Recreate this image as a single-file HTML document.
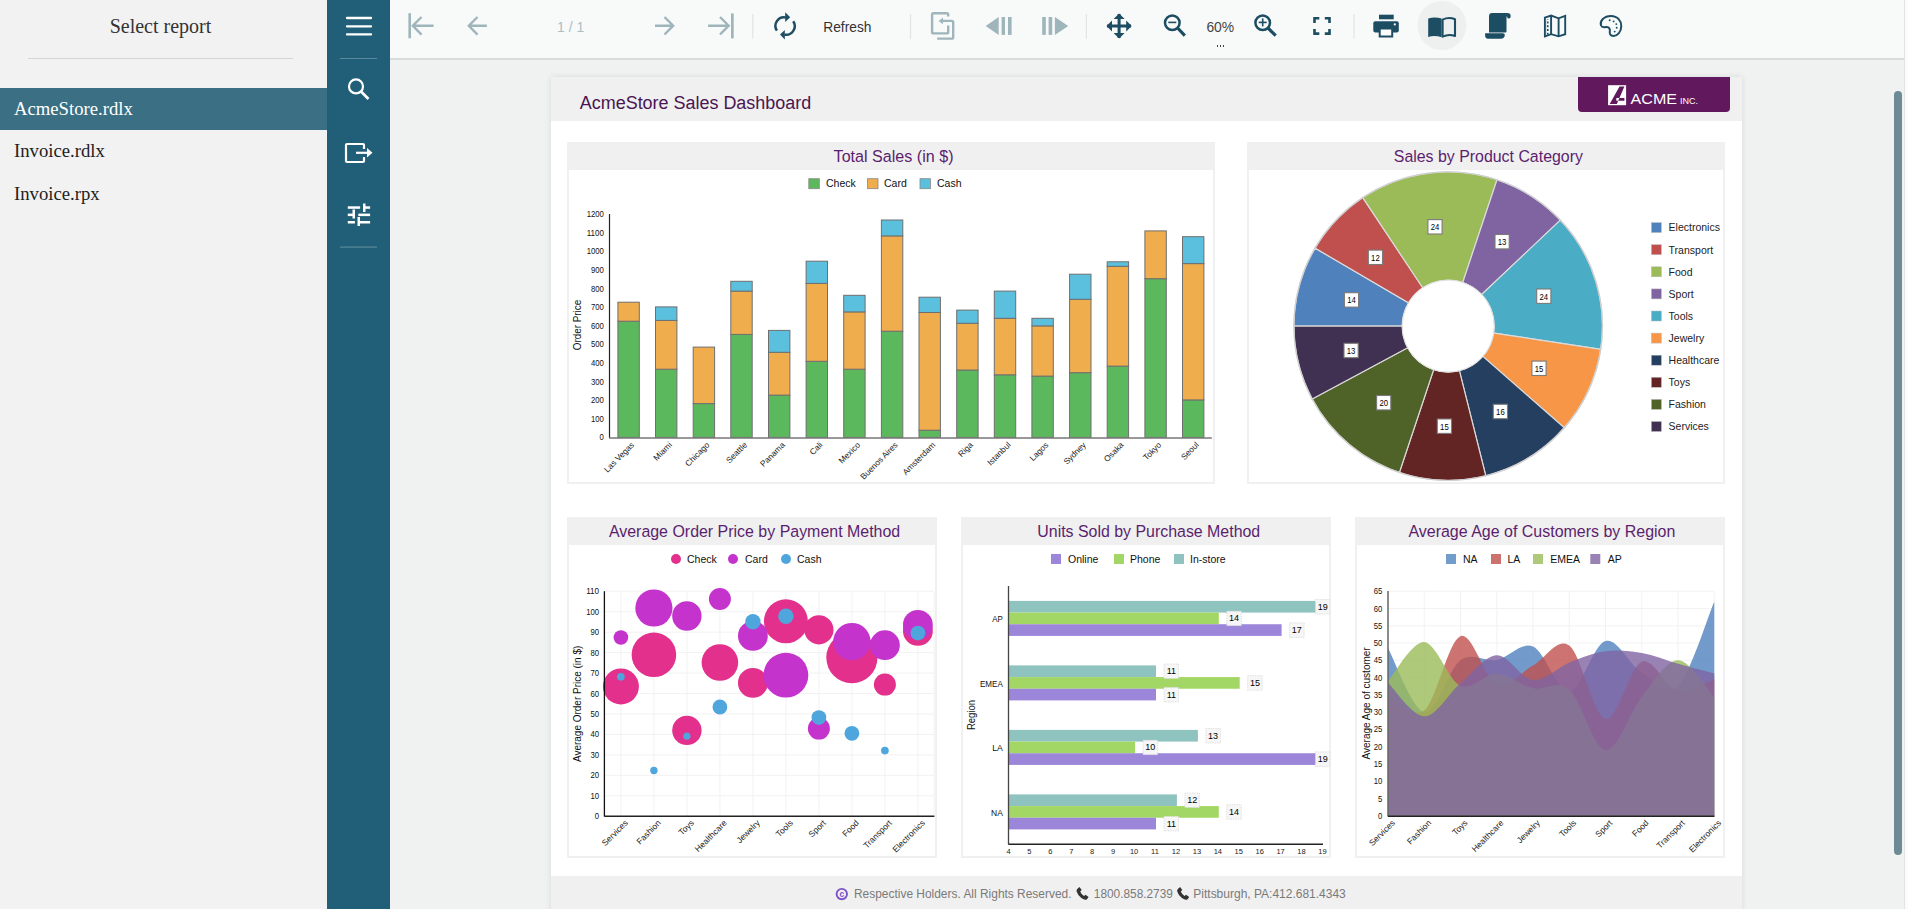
<!DOCTYPE html><html><head><meta charset="utf-8"><style>
*{margin:0;padding:0;box-sizing:border-box}
html,body{width:1908px;height:909px;overflow:hidden;background:#f0f1f1;font-family:"Liberation Sans",sans-serif}
.a{position:absolute}
#left{left:0;top:0;width:327px;height:909px;background:#f2f2f2;font-family:"Liberation Serif",serif}
#bar{left:327px;top:0;width:63px;height:909px;background:#215e77}
#tb{left:390px;top:0;width:1518px;height:60px;background:#f8f9f9;border-bottom:2px solid #d9dcdd}
#page{left:551px;top:77px;width:1191px;height:840px;background:#fff;box-shadow:0 0 6px rgba(0,0,0,0.10)}
svg{position:absolute;left:0;top:0;overflow:visible}
</style></head><body>
<div id="left" class="a">
<div class="a" style="left:0;top:14px;width:321px;text-align:center;font-size:20px;color:#333;line-height:24px">Select report</div>
<div class="a" style="left:28px;top:58px;width:265px;height:1px;background:#d4d4d4"></div>
<div class="a" style="left:0;top:88px;width:327px;height:42px;background:#3a6f84"></div>
<div class="a" style="left:14px;top:97.5px;font-size:18.7px;color:#fff;line-height:22px">AcmeStore.rdlx</div>
<div class="a" style="left:14px;top:140.4px;font-size:18.7px;color:#222;line-height:22px">Invoice.rdlx</div>
<div class="a" style="left:14px;top:183.3px;font-size:18.7px;color:#222;line-height:22px">Invoice.rpx</div>
</div>
<div id="bar" class="a"><svg width="63" height="909">
<line x1="20" y1="18" x2="44" y2="18" stroke="#fff" stroke-width="2.3" stroke-linecap="round"/>
<line x1="20" y1="26.3" x2="44" y2="26.3" stroke="#fff" stroke-width="2.3" stroke-linecap="round"/>
<line x1="20" y1="34.4" x2="44" y2="34.4" stroke="#fff" stroke-width="2.3" stroke-linecap="round"/>
<rect x="13" y="58" width="37" height="1" fill="#5b8a9c"/>
<circle cx="29" cy="86.4" r="7" fill="none" stroke="#fff" stroke-width="2.2"/>
<line x1="34" y1="91.5" x2="41.5" y2="99" stroke="#fff" stroke-width="2.6"/>
<path d="M37 149 V145 Q37 144 36 144 H20 Q19 144 19 145 V161 Q19 162 20 162 H36 Q37 162 37 161 V157" fill="none" stroke="#fff" stroke-width="2.2"/>
<line x1="29" y1="152.8" x2="41" y2="152.8" stroke="#fff" stroke-width="2.2"/>
<path d="M40 148 L45.5 152.8 L40 157.6 Z" fill="#fff"/>
<rect x="20.8" y="206.3" width="12.3" height="2.5" fill="#fff"/>
<rect x="36" y="206.3" width="7.1" height="2.5" fill="#fff"/>
<rect x="36" y="203.5" width="2.5" height="8.5" fill="#fff"/>
<rect x="20.8" y="213.6" width="7.1" height="2.5" fill="#fff"/>
<rect x="25.5" y="209.5" width="2.5" height="9" fill="#fff"/>
<rect x="31.3" y="213.6" width="11.8" height="2.5" fill="#fff"/>
<rect x="20.8" y="221" width="7.1" height="2.5" fill="#fff"/>
<rect x="30.5" y="217" width="2.5" height="9" fill="#fff"/>
<rect x="33" y="221" width="10.1" height="2.5" fill="#fff"/>
<rect x="13" y="246.5" width="37" height="1.2" fill="#5b8a9c"/>
</svg></div>
<div id="tb" class="a"></div>
<svg width="1908" height="60">
<rect x="408.4" y="13.2" width="2.6" height="25.1" fill="#9fb5bc"/>
<path d="M433.6 25.75 H413 M421.5 17 L412.8 25.75 L421.5 34.6" fill="none" stroke="#9fb5bc" stroke-width="2.4"/>
<path d="M486.9 25.75 H469 M477.5 17 L468.8 25.75 L477.5 34.6" fill="none" stroke="#9fb5bc" stroke-width="2.4"/>
<path d="M655 25.7 H673 M664.5 17 L673.2 25.7 L664.5 34.5" fill="none" stroke="#9fb5bc" stroke-width="2.4"/>
<path d="M708.1 25.7 H728.5 M720 17 L728.7 25.7 L720 34.5" fill="none" stroke="#9fb5bc" stroke-width="2.4"/>
<rect x="731" y="13.4" width="2.7" height="25" fill="#9fb5bc"/>
<rect x="752.1999999999999" y="14.2" width="1.2" height="24.5" fill="#dfe4e5"/>
<rect x="909.9" y="14.2" width="1.2" height="24.5" fill="#dfe4e5"/>
<rect x="1085.8000000000002" y="14.2" width="1.2" height="24.5" fill="#dfe4e5"/>
<rect x="1353.4" y="14.2" width="1.2" height="24.5" fill="#dfe4e5"/>
<path d="M776.9 30.6 A8.6 8.6 0 0 1 785.6 17.4" fill="none" stroke="#1d4d62" stroke-width="2.5"/>
<path d="M785.2 12.3 L790.2 17.3 L785.2 22 Z" fill="#1d4d62"/>
<path d="M793.2 21.3 A8.6 8.6 0 0 1 784.4 34.6" fill="none" stroke="#1d4d62" stroke-width="2.5"/>
<path d="M784.8 29.9 L780 34.6 L784.8 39.4 Z" fill="#1d4d62"/>
<path d="M948.2 16.6 V14.6 Q948.2 13.2 946.8 13.2 H933.5 Q932.1 13.2 932.1 14.6 V32 Q932.1 33.4 933.5 33.4 H946.8 Q948.2 33.4 948.2 32 V25.4" fill="none" stroke="#9fb5bc" stroke-width="2.4"/>
<path d="M942 20.9 H951.8 Q953.2 20.9 953.2 22.3 V37.2 Q953.2 38.6 951.8 38.6 H937.2" fill="none" stroke="#9fb5bc" stroke-width="2.4"/>
<path d="M938.6 20.9 L943 17.5 V24.3 Z" fill="#9fb5bc"/>
<path d="M985.7 26 L998.7 17 V34.9 Z" fill="#9fb5bc"/>
<rect x="1001.6" y="17" width="3.4" height="17.9" fill="#9fb5bc"/><rect x="1008" y="17" width="3.6" height="17.9" fill="#9fb5bc"/>
<rect x="1042.2" y="17" width="3.6" height="17.9" fill="#9fb5bc"/><rect x="1048.6" y="17" width="3.6" height="17.9" fill="#9fb5bc"/>
<path d="M1068.2 26 L1054.9 17 V34.9 Z" fill="#9fb5bc"/>
<path d="M1119.1 14 V38 M1107 26 H1131" stroke="#1d4d62" stroke-width="3"/>
<path d="M1119.1 13.5 L1113.6 19 H1124.6 Z M1119.1 38.4 L1113.6 33 H1124.6 Z M1106.5 26 L1112 20.5 V31.5 Z M1131.7 26 L1126.2 20.5 V31.5 Z" fill="#1d4d62"/>
<circle cx="1172.3" cy="22.7" r="7.3" fill="none" stroke="#1d4d62" stroke-width="2.5"/>
<line x1="1177.6" y1="28" x2="1184.8" y2="35.6" stroke="#1d4d62" stroke-width="3.2"/>
<line x1="1168.3" y1="22.4" x2="1176.3" y2="22.4" stroke="#1d4d62" stroke-width="1.6"/>
<circle cx="1262.7" cy="22.7" r="7.3" fill="none" stroke="#1d4d62" stroke-width="2.5"/>
<line x1="1268" y1="28" x2="1275.7" y2="35.6" stroke="#1d4d62" stroke-width="3.2"/>
<line x1="1258.7" y1="22.4" x2="1266.7" y2="22.4" stroke="#1d4d62" stroke-width="1.6"/><line x1="1262.7" y1="18.4" x2="1262.7" y2="26.4" stroke="#1d4d62" stroke-width="1.6"/>
<path d="M1314.5 23 V18.3 H1319.3 M1324.8 18.3 H1329.5 V23 M1329.5 29 V33.6 H1324.8 M1319.3 33.6 H1314.5 V29" fill="none" stroke="#1d4d62" stroke-width="2.6"/>
<rect x="1379" y="14.7" width="14.7" height="4.6" fill="#1d4d62"/>
<rect x="1373.3" y="21.3" width="25.5" height="11.2" rx="2" fill="#1d4d62"/>
<rect x="1379.7" y="28.5" width="12.5" height="8" fill="#fff" stroke="#1d4d62" stroke-width="2"/>
<circle cx="1394.8" cy="24.4" r="1.1" fill="#fff"/>
<circle cx="1441.9" cy="25.5" r="24.5" fill="#eef0f0"/>
<path d="M1428.2 18.6 Q1434.8 16.2 1441.6 18.6 V37.3 Q1434.8 34.9 1428.2 37 Z" fill="#1d4d62"/>
<path d="M1442.6 19.6 Q1449 16.6 1455 19.3 V36 Q1449 33.6 1442.6 36.6 Z" fill="none" stroke="#1d4d62" stroke-width="2.1" stroke-linejoin="round"/>
<path d="M1489 16.2 Q1489 13.1 1492.2 13.1 H1507.3 Q1510.7 13.1 1510.7 16.3 Q1510.7 18.5 1508.8 18.5 Q1507.4 18.5 1507.2 17.2 Q1506.9 15.6 1506.5 17 V31.3 Q1506.5 33 1504.5 32.4 H1489 Z" fill="#1d4d62"/>
<path d="M1485.1 33.3 H1503 Q1504.8 33.3 1504.8 34.8 Q1504.8 38.7 1500.5 38.7 H1488 Q1485.1 38.7 1485.1 35.6 Z" fill="#1d4d62"/>
<path d="M1544.9 17.6 L1551.1 15.5 L1558.6 18.3 L1565.2 15.8 V34.2 L1558.6 36.3 L1551.1 34.2 L1544.9 36.4 Z" fill="none" stroke="#1d4d62" stroke-width="1.9" stroke-linejoin="miter"/>
<path d="M1551.1 15.5 V34.2 M1558.6 18.3 V36.3" stroke="#1d4d62" stroke-width="1.9"/>
<path d="M1547.7 19.3 V34.5" stroke="#1d4d62" stroke-width="1.7"/>
<rect x="1546.8" y="19.700000000000003" width="2.4" height="1.8" fill="#f8f9f9"/>
<rect x="1546.8" y="23.400000000000002" width="2.4" height="1.8" fill="#f8f9f9"/>
<rect x="1546.8" y="27.200000000000003" width="2.4" height="1.8" fill="#f8f9f9"/>
<rect x="1546.8" y="31.0" width="2.4" height="1.8" fill="#f8f9f9"/>
<path d="M1601 25.5 C1599.5 21 1604 15.9 1611 15.9 C1617.8 15.9 1621.3 21 1621.3 26 C1621.3 32.5 1617 36 1613.5 36 C1610.5 36 1609.3 33.8 1609.8 31.5 C1610.3 29 1609 26.5 1606 27 C1603.5 27.5 1601.8 27.5 1601 25.5 Z" fill="none" stroke="#1d4d62" stroke-width="2"/>
<circle cx="1609.7" cy="20.2" r="0.95" fill="#1d4d62"/>
<circle cx="1613.6" cy="21.4" r="0.95" fill="#1d4d62"/>
<circle cx="1616.3" cy="24.1" r="0.95" fill="#1d4d62"/>
<circle cx="1616.7" cy="27.7" r="0.95" fill="#1d4d62"/>
<circle cx="1614.7" cy="31.6" r="0.95" fill="#1d4d62"/>
</svg>
<svg width="1908" height="60">
<text x="557" y="32" font-family="Liberation Sans" font-size="15" fill="#a9bfc5" textLength="27.2" lengthAdjust="spacingAndGlyphs">1 / 1</text>
<text x="823.3" y="32" font-family="Liberation Sans" font-size="15" fill="#333" textLength="48.1" lengthAdjust="spacingAndGlyphs">Refresh</text>
<text x="1206.4" y="31.9" font-family="Liberation Sans" font-size="15" fill="#444" textLength="27.8" lengthAdjust="spacingAndGlyphs">60%</text>
</svg>
<div class="a" style="left:1216px;top:45px;width:9px;height:2px;background-image:radial-gradient(circle,#444 0.8px,transparent 1px);background-size:3px 2px"></div>
<div class="a" style="left:1894px;top:91px;width:8px;height:764px;border-radius:4px;background:#6d8b95"></div>
<div class="a" style="left:1904px;top:0;width:1px;height:909px;background:#e2e4e4"></div>
<div class="a" style="left:1905px;top:0;width:3px;height:909px;background:#fbfbfb"></div>
<div id="page" class="a"></div>
<div class="a" style="left:551px;top:77px;width:1191px;height:44px;background:#f0f0f0"></div>
<div class="a" style="left:551px;top:876px;width:1191px;height:40px;background:#f0f0f0"></div>
<svg width="1908" height="909"><text x="579.8" y="109.4" font-family="Liberation Sans" font-size="18" fill="#4a1552" textLength="231.4" lengthAdjust="spacingAndGlyphs">AcmeStore Sales Dashboard</text></svg>
<div class="a" style="left:1578px;top:77px;width:152px;height:35px;background:#62185d;border-radius:0 0 4px 4px"></div>
<svg width="1908" height="909">
<circle cx="841.8" cy="894.1" r="5.2" fill="none" stroke="#7b52c8" stroke-width="1.9"/>
<text x="841.9" y="897.4" text-anchor="middle" font-family="Liberation Sans" font-weight="bold" font-size="8.5" fill="#7b52c8">c</text>
<text x="854" y="898" font-family="Liberation Sans" font-size="12.5" fill="#7a7a7a" textLength="217.5" lengthAdjust="spacingAndGlyphs">Respective Holders. All Rights Reserved.</text>
<path transform="translate(1076.3,887)" d="M0.9 1.9 L3.2 0 L5.4 3.1 L3.9 4.6 Q5 7.5 7.7 9.1 L9.2 7.7 L12.3 10 L10.5 12.4 Q8.5 13.6 5 11 Q1.5 8.3 0.3 4.5 Q0 3 0.9 1.9 Z" fill="#333"/>
<text x="1093.8" y="898" font-family="Liberation Sans" font-size="12.5" fill="#7a7a7a" textLength="79.1" lengthAdjust="spacingAndGlyphs">1800.858.2739</text>
<path transform="translate(1176.9,887)" d="M0.9 1.9 L3.2 0 L5.4 3.1 L3.9 4.6 Q5 7.5 7.7 9.1 L9.2 7.7 L12.3 10 L10.5 12.4 Q8.5 13.6 5 11 Q1.5 8.3 0.3 4.5 Q0 3 0.9 1.9 Z" fill="#333"/>
<text x="1193.3" y="898" font-family="Liberation Sans" font-size="12.5" fill="#7a7a7a" textLength="152.5" lengthAdjust="spacingAndGlyphs">Pittsburgh, PA:412.681.4343</text>
</svg>
<div class="a" style="left:567px;top:142px;width:648px;height:342px;background:#fff;border:2px solid #f0f0f0"></div><div class="a" style="left:567px;top:142px;width:648px;height:28px;background:#f0f0f0"></div>
<div class="a" style="left:1247px;top:142px;width:478px;height:342px;background:#fff;border:2px solid #f0f0f0"></div><div class="a" style="left:1247px;top:142px;width:478px;height:28px;background:#f0f0f0"></div>
<div class="a" style="left:567px;top:517px;width:370px;height:341px;background:#fff;border:2px solid #f0f0f0"></div><div class="a" style="left:567px;top:517px;width:370px;height:28px;background:#f0f0f0"></div>
<div class="a" style="left:961px;top:517px;width:370px;height:341px;background:#fff;border:2px solid #f0f0f0"></div><div class="a" style="left:961px;top:517px;width:370px;height:28px;background:#f0f0f0"></div>
<div class="a" style="left:1355px;top:517px;width:370px;height:341px;background:#fff;border:2px solid #f0f0f0"></div><div class="a" style="left:1355px;top:517px;width:370px;height:28px;background:#f0f0f0"></div>
<svg width="1908" height="909"><text x="833.6" y="162.2" font-family="Liberation Sans" font-size="16.3" fill="#5b1e6e" textLength="119.9" lengthAdjust="spacingAndGlyphs">Total Sales (in $)</text></svg>
<svg width="1908" height="909"><text x="1393.8" y="161.9" font-family="Liberation Sans" font-size="16.3" fill="#5b1e6e" textLength="189.1" lengthAdjust="spacingAndGlyphs">Sales by Product Category</text></svg>
<svg width="1908" height="909"><text x="608.9" y="536.5" font-family="Liberation Sans" font-size="16.3" fill="#5b1e6e" textLength="291.3" lengthAdjust="spacingAndGlyphs">Average Order Price by Payment Method</text></svg>
<svg width="1908" height="909"><text x="1037.3" y="536.8" font-family="Liberation Sans" font-size="16.3" fill="#5b1e6e" textLength="222.9" lengthAdjust="spacingAndGlyphs">Units Sold by Purchase Method</text></svg>
<svg width="1908" height="909"><text x="1408.4" y="536.9" font-family="Liberation Sans" font-size="16.3" fill="#5b1e6e" textLength="267" lengthAdjust="spacingAndGlyphs">Average Age of Customers by Region</text></svg>
<svg width="1908" height="909"><rect x="808.8" y="178.7" width="10.5" height="10" fill="#5cb85c" stroke="#888" stroke-width="0.8"/><text x="826" y="187.2" font-family="Liberation Sans" font-size="10.5" fill="#111">Check</text><rect x="867.5" y="178.7" width="10.5" height="10" fill="#f0ad4e" stroke="#888" stroke-width="0.8"/><text x="884" y="187.2" font-family="Liberation Sans" font-size="10.5" fill="#111">Card</text><rect x="920.0" y="178.7" width="10.5" height="10" fill="#5bc0de" stroke="#888" stroke-width="0.8"/><text x="937" y="187.2" font-family="Liberation Sans" font-size="10.5" fill="#111">Cash</text><rect x="617.9" y="321.2" width="21.4" height="116.2" fill="#5cb85c" stroke="#6f6f6f" stroke-width="1"/><rect x="617.9" y="302.2" width="21.4" height="19.0" fill="#f0ad4e" stroke="#6f6f6f" stroke-width="1"/><text transform="translate(634.8,445.5) rotate(-45)" text-anchor="end" font-family="Liberation Sans" font-size="8.3" fill="#222">Las Vegas</text><rect x="655.5" y="369.2" width="21.4" height="68.2" fill="#5cb85c" stroke="#6f6f6f" stroke-width="1"/><rect x="655.5" y="320.4" width="21.4" height="48.8" fill="#f0ad4e" stroke="#6f6f6f" stroke-width="1"/><rect x="655.5" y="306.9" width="21.4" height="13.5" fill="#5bc0de" stroke="#6f6f6f" stroke-width="1"/><text transform="translate(672.5,445.5) rotate(-45)" text-anchor="end" font-family="Liberation Sans" font-size="8.3" fill="#222">Miami</text><rect x="693.2" y="403.6" width="21.4" height="33.8" fill="#5cb85c" stroke="#6f6f6f" stroke-width="1"/><rect x="693.2" y="347.1" width="21.4" height="56.5" fill="#f0ad4e" stroke="#6f6f6f" stroke-width="1"/><text transform="translate(710.1,445.5) rotate(-45)" text-anchor="end" font-family="Liberation Sans" font-size="8.3" fill="#222">Chicago</text><rect x="730.8" y="334.4" width="21.4" height="103.0" fill="#5cb85c" stroke="#6f6f6f" stroke-width="1"/><rect x="730.8" y="291.1" width="21.4" height="43.3" fill="#f0ad4e" stroke="#6f6f6f" stroke-width="1"/><rect x="730.8" y="281.3" width="21.4" height="9.8" fill="#5bc0de" stroke="#6f6f6f" stroke-width="1"/><text transform="translate(747.7,445.5) rotate(-45)" text-anchor="end" font-family="Liberation Sans" font-size="8.3" fill="#222">Seattle</text><rect x="768.5" y="395.1" width="21.4" height="42.3" fill="#5cb85c" stroke="#6f6f6f" stroke-width="1"/><rect x="768.5" y="352.3" width="21.4" height="42.8" fill="#f0ad4e" stroke="#6f6f6f" stroke-width="1"/><rect x="768.5" y="330.4" width="21.4" height="21.9" fill="#5bc0de" stroke="#6f6f6f" stroke-width="1"/><text transform="translate(785.4,445.5) rotate(-45)" text-anchor="end" font-family="Liberation Sans" font-size="8.3" fill="#222">Panama</text><rect x="806.1" y="361.3" width="21.4" height="76.1" fill="#5cb85c" stroke="#6f6f6f" stroke-width="1"/><rect x="806.1" y="283.4" width="21.4" height="77.9" fill="#f0ad4e" stroke="#6f6f6f" stroke-width="1"/><rect x="806.1" y="261.2" width="21.4" height="22.2" fill="#5bc0de" stroke="#6f6f6f" stroke-width="1"/><text transform="translate(823.0,445.5) rotate(-45)" text-anchor="end" font-family="Liberation Sans" font-size="8.3" fill="#222">Cali</text><rect x="843.7" y="369.2" width="21.4" height="68.2" fill="#5cb85c" stroke="#6f6f6f" stroke-width="1"/><rect x="843.7" y="311.9" width="21.4" height="57.3" fill="#f0ad4e" stroke="#6f6f6f" stroke-width="1"/><rect x="843.7" y="295.3" width="21.4" height="16.6" fill="#5bc0de" stroke="#6f6f6f" stroke-width="1"/><text transform="translate(860.7,445.5) rotate(-45)" text-anchor="end" font-family="Liberation Sans" font-size="8.3" fill="#222">Mexico</text><rect x="881.4" y="331.2" width="21.4" height="106.2" fill="#5cb85c" stroke="#6f6f6f" stroke-width="1"/><rect x="881.4" y="235.9" width="21.4" height="95.3" fill="#f0ad4e" stroke="#6f6f6f" stroke-width="1"/><rect x="881.4" y="220.0" width="21.4" height="15.9" fill="#5bc0de" stroke="#6f6f6f" stroke-width="1"/><text transform="translate(898.3,445.5) rotate(-45)" text-anchor="end" font-family="Liberation Sans" font-size="8.3" fill="#222">Buenos Aires</text><rect x="919.0" y="430.2" width="21.4" height="7.2" fill="#5cb85c" stroke="#6f6f6f" stroke-width="1"/><rect x="919.0" y="312.5" width="21.4" height="117.7" fill="#f0ad4e" stroke="#6f6f6f" stroke-width="1"/><rect x="919.0" y="297.2" width="21.4" height="15.3" fill="#5bc0de" stroke="#6f6f6f" stroke-width="1"/><text transform="translate(935.9,445.5) rotate(-45)" text-anchor="end" font-family="Liberation Sans" font-size="8.3" fill="#222">Amsterdam</text><rect x="956.7" y="370.0" width="21.4" height="67.4" fill="#5cb85c" stroke="#6f6f6f" stroke-width="1"/><rect x="956.7" y="323.3" width="21.4" height="46.7" fill="#f0ad4e" stroke="#6f6f6f" stroke-width="1"/><rect x="956.7" y="310.1" width="21.4" height="13.2" fill="#5bc0de" stroke="#6f6f6f" stroke-width="1"/><text transform="translate(973.6,445.5) rotate(-45)" text-anchor="end" font-family="Liberation Sans" font-size="8.3" fill="#222">Riga</text><rect x="994.3" y="374.8" width="21.4" height="62.6" fill="#5cb85c" stroke="#6f6f6f" stroke-width="1"/><rect x="994.3" y="318.3" width="21.4" height="56.5" fill="#f0ad4e" stroke="#6f6f6f" stroke-width="1"/><rect x="994.3" y="291.1" width="21.4" height="27.2" fill="#5bc0de" stroke="#6f6f6f" stroke-width="1"/><text transform="translate(1011.2,445.5) rotate(-45)" text-anchor="end" font-family="Liberation Sans" font-size="8.3" fill="#222">Istanbul</text><rect x="1031.9" y="376.1" width="21.4" height="61.3" fill="#5cb85c" stroke="#6f6f6f" stroke-width="1"/><rect x="1031.9" y="325.9" width="21.4" height="50.2" fill="#f0ad4e" stroke="#6f6f6f" stroke-width="1"/><rect x="1031.9" y="318.3" width="21.4" height="7.6" fill="#5bc0de" stroke="#6f6f6f" stroke-width="1"/><text transform="translate(1048.9,445.5) rotate(-45)" text-anchor="end" font-family="Liberation Sans" font-size="8.3" fill="#222">Lagos</text><rect x="1069.6" y="372.7" width="21.4" height="64.7" fill="#5cb85c" stroke="#6f6f6f" stroke-width="1"/><rect x="1069.6" y="299.3" width="21.4" height="73.4" fill="#f0ad4e" stroke="#6f6f6f" stroke-width="1"/><rect x="1069.6" y="274.2" width="21.4" height="25.1" fill="#5bc0de" stroke="#6f6f6f" stroke-width="1"/><text transform="translate(1086.5,445.5) rotate(-45)" text-anchor="end" font-family="Liberation Sans" font-size="8.3" fill="#222">Sydney</text><rect x="1107.2" y="366.1" width="21.4" height="71.3" fill="#5cb85c" stroke="#6f6f6f" stroke-width="1"/><rect x="1107.2" y="266.3" width="21.4" height="99.8" fill="#f0ad4e" stroke="#6f6f6f" stroke-width="1"/><rect x="1107.2" y="261.8" width="21.4" height="4.5" fill="#5bc0de" stroke="#6f6f6f" stroke-width="1"/><text transform="translate(1124.1,445.5) rotate(-45)" text-anchor="end" font-family="Liberation Sans" font-size="8.3" fill="#222">Osaka</text><rect x="1144.9" y="278.7" width="21.4" height="158.7" fill="#5cb85c" stroke="#6f6f6f" stroke-width="1"/><rect x="1144.9" y="230.9" width="21.4" height="47.8" fill="#f0ad4e" stroke="#6f6f6f" stroke-width="1"/><text transform="translate(1161.8,445.5) rotate(-45)" text-anchor="end" font-family="Liberation Sans" font-size="8.3" fill="#222">Tokyo</text><rect x="1182.5" y="399.9" width="21.4" height="37.5" fill="#5cb85c" stroke="#6f6f6f" stroke-width="1"/><rect x="1182.5" y="263.6" width="21.4" height="136.3" fill="#f0ad4e" stroke="#6f6f6f" stroke-width="1"/><rect x="1182.5" y="236.7" width="21.4" height="26.9" fill="#5bc0de" stroke="#6f6f6f" stroke-width="1"/><text transform="translate(1199.4,445.5) rotate(-45)" text-anchor="end" font-family="Liberation Sans" font-size="8.3" fill="#222">Seoul</text><line x1="609.5" y1="214" x2="609.5" y2="438" stroke="#222" stroke-width="1.2"/><line x1="609.0" y1="438" x2="1211.8" y2="438" stroke="#777" stroke-width="1.6"/><text x="603.9" y="440.2" text-anchor="end" font-family="Liberation Sans" font-size="8.3" fill="#111" textLength="4.3" lengthAdjust="spacingAndGlyphs">0</text><text x="603.9" y="421.6" text-anchor="end" font-family="Liberation Sans" font-size="8.3" fill="#111" textLength="12.9" lengthAdjust="spacingAndGlyphs">100</text><text x="603.9" y="403.0" text-anchor="end" font-family="Liberation Sans" font-size="8.3" fill="#111" textLength="12.9" lengthAdjust="spacingAndGlyphs">200</text><text x="603.9" y="384.5" text-anchor="end" font-family="Liberation Sans" font-size="8.3" fill="#111" textLength="12.9" lengthAdjust="spacingAndGlyphs">300</text><text x="603.9" y="365.9" text-anchor="end" font-family="Liberation Sans" font-size="8.3" fill="#111" textLength="12.9" lengthAdjust="spacingAndGlyphs">400</text><text x="603.9" y="347.3" text-anchor="end" font-family="Liberation Sans" font-size="8.3" fill="#111" textLength="12.9" lengthAdjust="spacingAndGlyphs">500</text><text x="603.9" y="328.7" text-anchor="end" font-family="Liberation Sans" font-size="8.3" fill="#111" textLength="12.9" lengthAdjust="spacingAndGlyphs">600</text><text x="603.9" y="310.1" text-anchor="end" font-family="Liberation Sans" font-size="8.3" fill="#111" textLength="12.9" lengthAdjust="spacingAndGlyphs">700</text><text x="603.9" y="291.5" text-anchor="end" font-family="Liberation Sans" font-size="8.3" fill="#111" textLength="12.9" lengthAdjust="spacingAndGlyphs">800</text><text x="603.9" y="273.0" text-anchor="end" font-family="Liberation Sans" font-size="8.3" fill="#111" textLength="12.9" lengthAdjust="spacingAndGlyphs">900</text><text x="603.9" y="254.4" text-anchor="end" font-family="Liberation Sans" font-size="8.3" fill="#111" textLength="17.2" lengthAdjust="spacingAndGlyphs">1000</text><text x="603.9" y="235.8" text-anchor="end" font-family="Liberation Sans" font-size="8.3" fill="#111" textLength="17.2" lengthAdjust="spacingAndGlyphs">1100</text><text x="603.9" y="217.2" text-anchor="end" font-family="Liberation Sans" font-size="8.3" fill="#111" textLength="17.2" lengthAdjust="spacingAndGlyphs">1200</text><text transform="translate(581.2,325) rotate(-90)" text-anchor="middle" font-family="Liberation Sans" font-size="10.5" fill="#111" textLength="50.5" lengthAdjust="spacingAndGlyphs">Order Price</text></svg>
<svg width="1908" height="909"><path d="M1293.90 326.10 A154.3 154.3 0 0 1 1315.06 248.11 L1408.51 302.85 A46.0 46.0 0 0 0 1402.20 326.10 Z" fill="#4f81bd" stroke="#dadada" stroke-width="1.2"/><path d="M1315.06 248.11 A154.3 154.3 0 0 1 1362.78 197.60 L1422.73 287.79 A46.0 46.0 0 0 0 1408.51 302.85 Z" fill="#c0504d" stroke="#dadada" stroke-width="1.2"/><path d="M1362.78 197.60 A154.3 154.3 0 0 1 1496.99 179.72 L1462.75 282.46 A46.0 46.0 0 0 0 1422.73 287.79 Z" fill="#9bbb59" stroke="#dadada" stroke-width="1.2"/><path d="M1496.99 179.72 A154.3 154.3 0 0 1 1560.36 220.13 L1481.64 294.51 A46.0 46.0 0 0 0 1462.75 282.46 Z" fill="#8064a2" stroke="#dadada" stroke-width="1.2"/><path d="M1560.36 220.13 A154.3 154.3 0 0 1 1600.73 349.37 L1493.67 333.04 A46.0 46.0 0 0 0 1481.64 294.51 Z" fill="#4bacc6" stroke="#dadada" stroke-width="1.2"/><path d="M1600.73 349.37 A154.3 154.3 0 0 1 1564.29 427.75 L1482.81 356.40 A46.0 46.0 0 0 0 1493.67 333.04 Z" fill="#f79646" stroke="#dadada" stroke-width="1.2"/><path d="M1564.29 427.75 A154.3 154.3 0 0 1 1485.78 475.75 L1459.40 370.71 A46.0 46.0 0 0 0 1482.81 356.40 Z" fill="#243f60" stroke="#dadada" stroke-width="1.2"/><path d="M1485.78 475.75 A154.3 154.3 0 0 1 1399.41 472.48 L1433.65 369.74 A46.0 46.0 0 0 0 1459.40 370.71 Z" fill="#632523" stroke="#dadada" stroke-width="1.2"/><path d="M1399.41 472.48 A154.3 154.3 0 0 1 1312.21 399.00 L1407.66 347.83 A46.0 46.0 0 0 0 1433.65 369.74 Z" fill="#4f6228" stroke="#dadada" stroke-width="1.2"/><path d="M1312.21 399.00 A154.3 154.3 0 0 1 1293.90 326.10 L1402.20 326.10 A46.0 46.0 0 0 0 1407.66 347.83 Z" fill="#403152" stroke="#dadada" stroke-width="1.2"/><circle cx="1448.2" cy="326.1" r="154.3" fill="none" stroke="#d0d0d0" stroke-width="1.3"/><circle cx="1448.2" cy="326.1" r="46.0" fill="#fff" stroke="#e0e0e0" stroke-width="1"/><rect x="1344.4" y="292.7" width="14.2" height="14.4" fill="#fff" stroke="#7a7a7a" stroke-width="1.1"/><text x="1351.5" y="303.2" text-anchor="middle" font-family="Liberation Sans" font-size="9.3" fill="#000" textLength="8.6" lengthAdjust="spacingAndGlyphs">14</text><rect x="1368.3" y="250.1" width="14.2" height="14.4" fill="#fff" stroke="#7a7a7a" stroke-width="1.1"/><text x="1375.4" y="260.6" text-anchor="middle" font-family="Liberation Sans" font-size="9.3" fill="#000" textLength="8.6" lengthAdjust="spacingAndGlyphs">12</text><rect x="1427.9" y="219.6" width="14.2" height="14.4" fill="#fff" stroke="#7a7a7a" stroke-width="1.1"/><text x="1435.0" y="230.1" text-anchor="middle" font-family="Liberation Sans" font-size="9.3" fill="#000" textLength="8.6" lengthAdjust="spacingAndGlyphs">24</text><rect x="1495.0" y="234.5" width="14.2" height="14.4" fill="#fff" stroke="#7a7a7a" stroke-width="1.1"/><text x="1502.1" y="245.0" text-anchor="middle" font-family="Liberation Sans" font-size="9.3" fill="#000" textLength="8.6" lengthAdjust="spacingAndGlyphs">13</text><rect x="1536.7" y="289.0" width="14.2" height="14.4" fill="#fff" stroke="#7a7a7a" stroke-width="1.1"/><text x="1543.8" y="299.5" text-anchor="middle" font-family="Liberation Sans" font-size="9.3" fill="#000" textLength="8.6" lengthAdjust="spacingAndGlyphs">24</text><rect x="1531.9" y="361.1" width="14.2" height="14.4" fill="#fff" stroke="#7a7a7a" stroke-width="1.1"/><text x="1539.0" y="371.6" text-anchor="middle" font-family="Liberation Sans" font-size="9.3" fill="#000" textLength="8.6" lengthAdjust="spacingAndGlyphs">15</text><rect x="1493.3" y="404.3" width="14.2" height="14.4" fill="#fff" stroke="#7a7a7a" stroke-width="1.1"/><text x="1500.4" y="414.8" text-anchor="middle" font-family="Liberation Sans" font-size="9.3" fill="#000" textLength="8.6" lengthAdjust="spacingAndGlyphs">16</text><rect x="1437.3" y="419.0" width="14.2" height="14.4" fill="#fff" stroke="#7a7a7a" stroke-width="1.1"/><text x="1444.4" y="429.5" text-anchor="middle" font-family="Liberation Sans" font-size="9.3" fill="#000" textLength="8.6" lengthAdjust="spacingAndGlyphs">15</text><rect x="1376.6" y="395.5" width="14.2" height="14.4" fill="#fff" stroke="#7a7a7a" stroke-width="1.1"/><text x="1383.7" y="406.0" text-anchor="middle" font-family="Liberation Sans" font-size="9.3" fill="#000" textLength="8.6" lengthAdjust="spacingAndGlyphs">20</text><rect x="1344.0" y="343.3" width="14.2" height="14.4" fill="#fff" stroke="#7a7a7a" stroke-width="1.1"/><text x="1351.1" y="353.8" text-anchor="middle" font-family="Liberation Sans" font-size="9.3" fill="#000" textLength="8.6" lengthAdjust="spacingAndGlyphs">13</text><rect x="1651.4" y="222.6" width="10" height="10" fill="#4f81bd" stroke="#bbb" stroke-width="0.5"/><text x="1668.6" y="231.4" font-family="Liberation Sans" font-size="10.5" fill="#222">Electronics</text><rect x="1651.4" y="244.7" width="10" height="10" fill="#c0504d" stroke="#bbb" stroke-width="0.5"/><text x="1668.6" y="253.5" font-family="Liberation Sans" font-size="10.5" fill="#222">Transport</text><rect x="1651.4" y="266.8" width="10" height="10" fill="#9bbb59" stroke="#bbb" stroke-width="0.5"/><text x="1668.6" y="275.6" font-family="Liberation Sans" font-size="10.5" fill="#222">Food</text><rect x="1651.4" y="288.9" width="10" height="10" fill="#8064a2" stroke="#bbb" stroke-width="0.5"/><text x="1668.6" y="297.7" font-family="Liberation Sans" font-size="10.5" fill="#222">Sport</text><rect x="1651.4" y="311.0" width="10" height="10" fill="#4bacc6" stroke="#bbb" stroke-width="0.5"/><text x="1668.6" y="319.8" font-family="Liberation Sans" font-size="10.5" fill="#222">Tools</text><rect x="1651.4" y="333.1" width="10" height="10" fill="#f79646" stroke="#bbb" stroke-width="0.5"/><text x="1668.6" y="341.9" font-family="Liberation Sans" font-size="10.5" fill="#222">Jewelry</text><rect x="1651.4" y="355.2" width="10" height="10" fill="#243f60" stroke="#bbb" stroke-width="0.5"/><text x="1668.6" y="364.0" font-family="Liberation Sans" font-size="10.5" fill="#222">Healthcare</text><rect x="1651.4" y="377.3" width="10" height="10" fill="#632523" stroke="#bbb" stroke-width="0.5"/><text x="1668.6" y="386.1" font-family="Liberation Sans" font-size="10.5" fill="#222">Toys</text><rect x="1651.4" y="399.4" width="10" height="10" fill="#4f6228" stroke="#bbb" stroke-width="0.5"/><text x="1668.6" y="408.2" font-family="Liberation Sans" font-size="10.5" fill="#222">Fashion</text><rect x="1651.4" y="421.5" width="10" height="10" fill="#403152" stroke="#bbb" stroke-width="0.5"/><text x="1668.6" y="430.3" font-family="Liberation Sans" font-size="10.5" fill="#222">Services</text></svg>
<svg width="1908" height="909"><circle cx="676" cy="559" r="5" fill="#e3308c"/><text x="687" y="563" font-family="Liberation Sans" font-size="10.5" fill="#111">Check</text><circle cx="733" cy="559" r="5" fill="#c433cc"/><text x="745" y="563" font-family="Liberation Sans" font-size="10.5" fill="#111">Card</text><circle cx="786" cy="559" r="5" fill="#4ea6dd"/><text x="797" y="563" font-family="Liberation Sans" font-size="10.5" fill="#111">Cash</text><text x="599.1" y="819.2" text-anchor="end" font-family="Liberation Sans" font-size="8.3" fill="#111" textLength="4.3" lengthAdjust="spacingAndGlyphs">0</text><line x1="604.4" y1="795.8" x2="934" y2="795.8" stroke="#f2f2f2" stroke-width="1"/><text x="599.1" y="798.8" text-anchor="end" font-family="Liberation Sans" font-size="8.3" fill="#111" textLength="8.6" lengthAdjust="spacingAndGlyphs">10</text><line x1="604.4" y1="775.3" x2="934" y2="775.3" stroke="#f2f2f2" stroke-width="1"/><text x="599.1" y="778.3" text-anchor="end" font-family="Liberation Sans" font-size="8.3" fill="#111" textLength="8.6" lengthAdjust="spacingAndGlyphs">20</text><line x1="604.4" y1="754.9" x2="934" y2="754.9" stroke="#f2f2f2" stroke-width="1"/><text x="599.1" y="757.9" text-anchor="end" font-family="Liberation Sans" font-size="8.3" fill="#111" textLength="8.6" lengthAdjust="spacingAndGlyphs">30</text><line x1="604.4" y1="734.4" x2="934" y2="734.4" stroke="#f2f2f2" stroke-width="1"/><text x="599.1" y="737.4" text-anchor="end" font-family="Liberation Sans" font-size="8.3" fill="#111" textLength="8.6" lengthAdjust="spacingAndGlyphs">40</text><line x1="604.4" y1="714.0" x2="934" y2="714.0" stroke="#f2f2f2" stroke-width="1"/><text x="599.1" y="717.0" text-anchor="end" font-family="Liberation Sans" font-size="8.3" fill="#111" textLength="8.6" lengthAdjust="spacingAndGlyphs">50</text><line x1="604.4" y1="693.5" x2="934" y2="693.5" stroke="#f2f2f2" stroke-width="1"/><text x="599.1" y="696.5" text-anchor="end" font-family="Liberation Sans" font-size="8.3" fill="#111" textLength="8.6" lengthAdjust="spacingAndGlyphs">60</text><line x1="604.4" y1="673.1" x2="934" y2="673.1" stroke="#f2f2f2" stroke-width="1"/><text x="599.1" y="676.1" text-anchor="end" font-family="Liberation Sans" font-size="8.3" fill="#111" textLength="8.6" lengthAdjust="spacingAndGlyphs">70</text><line x1="604.4" y1="652.6" x2="934" y2="652.6" stroke="#f2f2f2" stroke-width="1"/><text x="599.1" y="655.6" text-anchor="end" font-family="Liberation Sans" font-size="8.3" fill="#111" textLength="8.6" lengthAdjust="spacingAndGlyphs">80</text><line x1="604.4" y1="632.2" x2="934" y2="632.2" stroke="#f2f2f2" stroke-width="1"/><text x="599.1" y="635.2" text-anchor="end" font-family="Liberation Sans" font-size="8.3" fill="#111" textLength="8.6" lengthAdjust="spacingAndGlyphs">90</text><line x1="604.4" y1="611.7" x2="934" y2="611.7" stroke="#f2f2f2" stroke-width="1"/><text x="599.1" y="614.7" text-anchor="end" font-family="Liberation Sans" font-size="8.3" fill="#111" textLength="12.9" lengthAdjust="spacingAndGlyphs">100</text><line x1="604.4" y1="591.2" x2="934" y2="591.2" stroke="#f2f2f2" stroke-width="1"/><text x="599.1" y="594.2" text-anchor="end" font-family="Liberation Sans" font-size="8.3" fill="#111" textLength="12.9" lengthAdjust="spacingAndGlyphs">110</text><line x1="620.9" y1="592" x2="620.9" y2="816.2" stroke="#f2f2f2" stroke-width="1"/><text transform="translate(628.4,823.5) rotate(-45)" text-anchor="end" font-family="Liberation Sans" font-size="8.5" fill="#222">Services</text><line x1="653.9" y1="592" x2="653.9" y2="816.2" stroke="#f2f2f2" stroke-width="1"/><text transform="translate(661.4,823.5) rotate(-45)" text-anchor="end" font-family="Liberation Sans" font-size="8.5" fill="#222">Fashion</text><line x1="686.9" y1="592" x2="686.9" y2="816.2" stroke="#f2f2f2" stroke-width="1"/><text transform="translate(694.4,823.5) rotate(-45)" text-anchor="end" font-family="Liberation Sans" font-size="8.5" fill="#222">Toys</text><line x1="719.9" y1="592" x2="719.9" y2="816.2" stroke="#f2f2f2" stroke-width="1"/><text transform="translate(727.4,823.5) rotate(-45)" text-anchor="end" font-family="Liberation Sans" font-size="8.5" fill="#222">Healthcare</text><line x1="752.9" y1="592" x2="752.9" y2="816.2" stroke="#f2f2f2" stroke-width="1"/><text transform="translate(760.4,823.5) rotate(-45)" text-anchor="end" font-family="Liberation Sans" font-size="8.5" fill="#222">Jewelry</text><line x1="785.9" y1="592" x2="785.9" y2="816.2" stroke="#f2f2f2" stroke-width="1"/><text transform="translate(793.4,823.5) rotate(-45)" text-anchor="end" font-family="Liberation Sans" font-size="8.5" fill="#222">Tools</text><line x1="818.9" y1="592" x2="818.9" y2="816.2" stroke="#f2f2f2" stroke-width="1"/><text transform="translate(826.4,823.5) rotate(-45)" text-anchor="end" font-family="Liberation Sans" font-size="8.5" fill="#222">Sport</text><line x1="851.9" y1="592" x2="851.9" y2="816.2" stroke="#f2f2f2" stroke-width="1"/><text transform="translate(859.4,823.5) rotate(-45)" text-anchor="end" font-family="Liberation Sans" font-size="8.5" fill="#222">Food</text><line x1="884.9" y1="592" x2="884.9" y2="816.2" stroke="#f2f2f2" stroke-width="1"/><text transform="translate(892.4,823.5) rotate(-45)" text-anchor="end" font-family="Liberation Sans" font-size="8.5" fill="#222">Transport</text><line x1="917.9" y1="592" x2="917.9" y2="816.2" stroke="#f2f2f2" stroke-width="1"/><text transform="translate(925.4,823.5) rotate(-45)" text-anchor="end" font-family="Liberation Sans" font-size="8.5" fill="#222">Electronics</text><line x1="934" y1="592" x2="934" y2="815.9" stroke="#f2f2f2" stroke-width="1"/><circle cx="620.9" cy="686.4" r="18" fill="#e3308c"/><circle cx="653.9" cy="654.8" r="22.3" fill="#e3308c"/><circle cx="686.9" cy="730.4" r="14.7" fill="#e3308c"/><circle cx="719.9" cy="662.5" r="18.3" fill="#e3308c"/><circle cx="752.9" cy="682.9" r="14.9" fill="#e3308c"/><circle cx="785.9" cy="621.3" r="22" fill="#e3308c"/><circle cx="818.9" cy="629.8" r="14.6" fill="#e3308c"/><circle cx="851.9" cy="657.6" r="25.6" fill="#e3308c"/><circle cx="884.9" cy="684.6" r="11" fill="#e3308c"/><circle cx="917.9" cy="630.9" r="14.9" fill="#e3308c"/><circle cx="620.9" cy="637.5" r="7.3" fill="#c433cc"/><circle cx="653.9" cy="608" r="18.6" fill="#c433cc"/><circle cx="686.9" cy="616" r="14.7" fill="#c433cc"/><circle cx="719.9" cy="599" r="11" fill="#c433cc"/><circle cx="752.9" cy="635.9" r="14.9" fill="#c433cc"/><circle cx="785.9" cy="675.2" r="22.4" fill="#c433cc"/><circle cx="818.9" cy="728.6" r="11" fill="#c433cc"/><circle cx="851.9" cy="641.6" r="18.7" fill="#c433cc"/><circle cx="884.9" cy="645.2" r="14.9" fill="#c433cc"/><circle cx="917.9" cy="624.9" r="14.9" fill="#c433cc"/><circle cx="620.9" cy="676.8" r="3.85" fill="#4ea6dd"/><circle cx="653.9" cy="770.5" r="3.7" fill="#4ea6dd"/><circle cx="686.9" cy="736.2" r="3.6" fill="#4ea6dd"/><circle cx="719.9" cy="707" r="7.4" fill="#4ea6dd"/><circle cx="752.9" cy="621.8" r="7.7" fill="#4ea6dd"/><circle cx="785.9" cy="616.3" r="7.7" fill="#4ea6dd"/><circle cx="818.9" cy="717.6" r="7.4" fill="#4ea6dd"/><circle cx="851.9" cy="733.3" r="7.4" fill="#4ea6dd"/><circle cx="884.9" cy="750.6" r="3.85" fill="#4ea6dd"/><circle cx="917.9" cy="633.1" r="7.4" fill="#4ea6dd"/><line x1="604.4" y1="591.2" x2="604.4" y2="816.5" stroke="#111" stroke-width="1.3"/><line x1="604.4" y1="816.3" x2="934.4" y2="816.3" stroke="#222" stroke-width="1.5"/><text transform="translate(581,703.9) rotate(-90)" text-anchor="middle" font-family="Liberation Sans" font-size="11" fill="#111" textLength="116.3" lengthAdjust="spacingAndGlyphs">Average Order Price (in $)</text></svg>
<svg width="1908" height="909"><rect x="1051" y="554" width="10" height="10" fill="#9b86d9"/><text x="1068" y="563" font-family="Liberation Sans" font-size="10.5" fill="#111">Online</text><rect x="1114" y="554" width="10" height="10" fill="#a3d765"/><text x="1130" y="563" font-family="Liberation Sans" font-size="10.5" fill="#111">Phone</text><rect x="1174" y="554" width="10" height="10" fill="#8fc3bf"/><text x="1190" y="563" font-family="Liberation Sans" font-size="10.5" fill="#111">In-store</text><rect x="1009" y="600.90" width="314.5" height="11.67" fill="#8fc3bf"/><rect x="1009" y="612.57" width="209.8" height="11.67" fill="#a3d765"/><rect x="1009" y="624.24" width="272.6" height="11.67" fill="#9b86d9"/><text x="1002.8" y="622.4" text-anchor="end" font-family="Liberation Sans" font-size="9.8" fill="#111" textLength="10.6" lengthAdjust="spacingAndGlyphs">AP</text><rect x="1009" y="665.40" width="147.0" height="11.67" fill="#8fc3bf"/><rect x="1009" y="677.07" width="230.7" height="11.67" fill="#a3d765"/><rect x="1009" y="688.74" width="147.0" height="11.67" fill="#9b86d9"/><text x="1002.8" y="686.9" text-anchor="end" font-family="Liberation Sans" font-size="9.8" fill="#111" textLength="22.8" lengthAdjust="spacingAndGlyphs">EMEA</text><rect x="1009" y="729.90" width="188.9" height="11.67" fill="#8fc3bf"/><rect x="1009" y="741.57" width="126.1" height="11.67" fill="#a3d765"/><rect x="1009" y="753.24" width="314.5" height="11.67" fill="#9b86d9"/><text x="1002.8" y="751.4" text-anchor="end" font-family="Liberation Sans" font-size="9.8" fill="#111" textLength="10.6" lengthAdjust="spacingAndGlyphs">LA</text><rect x="1009" y="794.40" width="167.9" height="11.67" fill="#8fc3bf"/><rect x="1009" y="806.07" width="209.8" height="11.67" fill="#a3d765"/><rect x="1009" y="817.74" width="147.0" height="11.67" fill="#9b86d9"/><text x="1002.8" y="815.9" text-anchor="end" font-family="Liberation Sans" font-size="9.8" fill="#111" textLength="11.8" lengthAdjust="spacingAndGlyphs">NA</text><rect x="1315.4" y="599.5" width="14.5" height="14.5" fill="#f6f6f6" stroke="#d8d8d8" stroke-width="0.9" stroke-dasharray="1.2 1.2"/><text x="1322.7" y="609.7" text-anchor="middle" font-family="Liberation Sans" font-size="9" fill="#000">19</text><rect x="1226.8" y="611.2" width="14.5" height="14.5" fill="#f6f6f6" stroke="#d8d8d8" stroke-width="0.9" stroke-dasharray="1.2 1.2"/><text x="1234.0" y="621.4" text-anchor="middle" font-family="Liberation Sans" font-size="9" fill="#000">14</text><rect x="1289.6" y="622.9" width="14.5" height="14.5" fill="#f6f6f6" stroke="#d8d8d8" stroke-width="0.9" stroke-dasharray="1.2 1.2"/><text x="1296.8" y="633.1" text-anchor="middle" font-family="Liberation Sans" font-size="9" fill="#000">17</text><rect x="1164.0" y="664.0" width="14.5" height="14.5" fill="#f6f6f6" stroke="#d8d8d8" stroke-width="0.9" stroke-dasharray="1.2 1.2"/><text x="1171.3" y="674.2" text-anchor="middle" font-family="Liberation Sans" font-size="9" fill="#000">11</text><rect x="1247.7" y="675.7" width="14.5" height="14.5" fill="#f6f6f6" stroke="#d8d8d8" stroke-width="0.9" stroke-dasharray="1.2 1.2"/><text x="1255.0" y="685.9" text-anchor="middle" font-family="Liberation Sans" font-size="9" fill="#000">15</text><rect x="1164.0" y="687.4" width="14.5" height="14.5" fill="#f6f6f6" stroke="#d8d8d8" stroke-width="0.9" stroke-dasharray="1.2 1.2"/><text x="1171.3" y="697.6" text-anchor="middle" font-family="Liberation Sans" font-size="9" fill="#000">11</text><rect x="1205.9" y="728.5" width="14.5" height="14.5" fill="#f6f6f6" stroke="#d8d8d8" stroke-width="0.9" stroke-dasharray="1.2 1.2"/><text x="1213.1" y="738.7" text-anchor="middle" font-family="Liberation Sans" font-size="9" fill="#000">13</text><rect x="1143.1" y="740.2" width="14.5" height="14.5" fill="#f6f6f6" stroke="#d8d8d8" stroke-width="0.9" stroke-dasharray="1.2 1.2"/><text x="1150.3" y="750.4" text-anchor="middle" font-family="Liberation Sans" font-size="9" fill="#000">10</text><rect x="1315.4" y="751.9" width="14.5" height="14.5" fill="#f6f6f6" stroke="#d8d8d8" stroke-width="0.9" stroke-dasharray="1.2 1.2"/><text x="1322.7" y="762.1" text-anchor="middle" font-family="Liberation Sans" font-size="9" fill="#000">19</text><rect x="1184.9" y="793.0" width="14.5" height="14.5" fill="#f6f6f6" stroke="#d8d8d8" stroke-width="0.9" stroke-dasharray="1.2 1.2"/><text x="1192.2" y="803.2" text-anchor="middle" font-family="Liberation Sans" font-size="9" fill="#000">12</text><rect x="1226.8" y="804.7" width="14.5" height="14.5" fill="#f6f6f6" stroke="#d8d8d8" stroke-width="0.9" stroke-dasharray="1.2 1.2"/><text x="1234.0" y="814.9" text-anchor="middle" font-family="Liberation Sans" font-size="9" fill="#000">14</text><rect x="1164.0" y="816.4" width="14.5" height="14.5" fill="#f6f6f6" stroke="#d8d8d8" stroke-width="0.9" stroke-dasharray="1.2 1.2"/><text x="1171.3" y="826.6" text-anchor="middle" font-family="Liberation Sans" font-size="9" fill="#000">11</text><text x="1008.5" y="853.5" text-anchor="middle" font-family="Liberation Sans" font-size="7.5" fill="#222">4</text><text x="1029.4" y="853.5" text-anchor="middle" font-family="Liberation Sans" font-size="7.5" fill="#222">5</text><text x="1050.4" y="853.5" text-anchor="middle" font-family="Liberation Sans" font-size="7.5" fill="#222">6</text><text x="1071.3" y="853.5" text-anchor="middle" font-family="Liberation Sans" font-size="7.5" fill="#222">7</text><text x="1092.2" y="853.5" text-anchor="middle" font-family="Liberation Sans" font-size="7.5" fill="#222">8</text><text x="1113.2" y="853.5" text-anchor="middle" font-family="Liberation Sans" font-size="7.5" fill="#222">9</text><text x="1134.1" y="853.5" text-anchor="middle" font-family="Liberation Sans" font-size="7.5" fill="#222">10</text><text x="1155.0" y="853.5" text-anchor="middle" font-family="Liberation Sans" font-size="7.5" fill="#222">11</text><text x="1175.9" y="853.5" text-anchor="middle" font-family="Liberation Sans" font-size="7.5" fill="#222">12</text><text x="1196.9" y="853.5" text-anchor="middle" font-family="Liberation Sans" font-size="7.5" fill="#222">13</text><text x="1217.8" y="853.5" text-anchor="middle" font-family="Liberation Sans" font-size="7.5" fill="#222">14</text><text x="1238.7" y="853.5" text-anchor="middle" font-family="Liberation Sans" font-size="7.5" fill="#222">15</text><text x="1259.7" y="853.5" text-anchor="middle" font-family="Liberation Sans" font-size="7.5" fill="#222">16</text><text x="1280.6" y="853.5" text-anchor="middle" font-family="Liberation Sans" font-size="7.5" fill="#222">17</text><text x="1301.5" y="853.5" text-anchor="middle" font-family="Liberation Sans" font-size="7.5" fill="#222">18</text><text x="1322.5" y="853.5" text-anchor="middle" font-family="Liberation Sans" font-size="7.5" fill="#222">19</text><line x1="1008.5" y1="586" x2="1008.5" y2="844.5" stroke="#444" stroke-width="1.3"/><line x1="1008.5" y1="844.3" x2="1323" y2="844.3" stroke="#222" stroke-width="1.5"/><text transform="translate(975.2,715) rotate(-90)" text-anchor="middle" font-family="Liberation Sans" font-size="11" fill="#111" textLength="30.2" lengthAdjust="spacingAndGlyphs">Region</text></svg>
<svg width="1908" height="909"><rect x="1446" y="554" width="10" height="10" fill="#729ccc"/><text x="1463" y="563" font-family="Liberation Sans" font-size="10.5" fill="#111">NA</text><rect x="1491" y="554" width="10" height="10" fill="#cd736f"/><text x="1507.5" y="563" font-family="Liberation Sans" font-size="10.5" fill="#111">LA</text><rect x="1533" y="554" width="10" height="10" fill="#afc97a"/><text x="1550.3" y="563" font-family="Liberation Sans" font-size="10.5" fill="#111">EMEA</text><rect x="1590.3" y="554" width="10" height="10" fill="#9983b5"/><text x="1607.7" y="563" font-family="Liberation Sans" font-size="10.5" fill="#111">AP</text><text x="1382.4" y="818.8" text-anchor="end" font-family="Liberation Sans" font-size="8.3" fill="#111" textLength="4.3" lengthAdjust="spacingAndGlyphs">0</text><line x1="1388.0" y1="798.5" x2="1714.5" y2="798.5" stroke="#f2f2f2" stroke-width="1"/><text x="1382.4" y="801.5" text-anchor="end" font-family="Liberation Sans" font-size="8.3" fill="#111" textLength="4.3" lengthAdjust="spacingAndGlyphs">5</text><line x1="1388.0" y1="781.2" x2="1714.5" y2="781.2" stroke="#f2f2f2" stroke-width="1"/><text x="1382.4" y="784.2" text-anchor="end" font-family="Liberation Sans" font-size="8.3" fill="#111" textLength="8.6" lengthAdjust="spacingAndGlyphs">10</text><line x1="1388.0" y1="764.0" x2="1714.5" y2="764.0" stroke="#f2f2f2" stroke-width="1"/><text x="1382.4" y="767.0" text-anchor="end" font-family="Liberation Sans" font-size="8.3" fill="#111" textLength="8.6" lengthAdjust="spacingAndGlyphs">15</text><line x1="1388.0" y1="746.7" x2="1714.5" y2="746.7" stroke="#f2f2f2" stroke-width="1"/><text x="1382.4" y="749.7" text-anchor="end" font-family="Liberation Sans" font-size="8.3" fill="#111" textLength="8.6" lengthAdjust="spacingAndGlyphs">20</text><line x1="1388.0" y1="729.4" x2="1714.5" y2="729.4" stroke="#f2f2f2" stroke-width="1"/><text x="1382.4" y="732.4" text-anchor="end" font-family="Liberation Sans" font-size="8.3" fill="#111" textLength="8.6" lengthAdjust="spacingAndGlyphs">25</text><line x1="1388.0" y1="712.1" x2="1714.5" y2="712.1" stroke="#f2f2f2" stroke-width="1"/><text x="1382.4" y="715.1" text-anchor="end" font-family="Liberation Sans" font-size="8.3" fill="#111" textLength="8.6" lengthAdjust="spacingAndGlyphs">30</text><line x1="1388.0" y1="694.9" x2="1714.5" y2="694.9" stroke="#f2f2f2" stroke-width="1"/><text x="1382.4" y="697.9" text-anchor="end" font-family="Liberation Sans" font-size="8.3" fill="#111" textLength="8.6" lengthAdjust="spacingAndGlyphs">35</text><line x1="1388.0" y1="677.6" x2="1714.5" y2="677.6" stroke="#f2f2f2" stroke-width="1"/><text x="1382.4" y="680.6" text-anchor="end" font-family="Liberation Sans" font-size="8.3" fill="#111" textLength="8.6" lengthAdjust="spacingAndGlyphs">40</text><line x1="1388.0" y1="660.3" x2="1714.5" y2="660.3" stroke="#f2f2f2" stroke-width="1"/><text x="1382.4" y="663.3" text-anchor="end" font-family="Liberation Sans" font-size="8.3" fill="#111" textLength="8.6" lengthAdjust="spacingAndGlyphs">45</text><line x1="1388.0" y1="643.0" x2="1714.5" y2="643.0" stroke="#f2f2f2" stroke-width="1"/><text x="1382.4" y="646.0" text-anchor="end" font-family="Liberation Sans" font-size="8.3" fill="#111" textLength="8.6" lengthAdjust="spacingAndGlyphs">50</text><line x1="1388.0" y1="625.8" x2="1714.5" y2="625.8" stroke="#f2f2f2" stroke-width="1"/><text x="1382.4" y="628.8" text-anchor="end" font-family="Liberation Sans" font-size="8.3" fill="#111" textLength="8.6" lengthAdjust="spacingAndGlyphs">55</text><line x1="1388.0" y1="608.5" x2="1714.5" y2="608.5" stroke="#f2f2f2" stroke-width="1"/><text x="1382.4" y="611.5" text-anchor="end" font-family="Liberation Sans" font-size="8.3" fill="#111" textLength="8.6" lengthAdjust="spacingAndGlyphs">60</text><line x1="1388.0" y1="591.2" x2="1714.5" y2="591.2" stroke="#f2f2f2" stroke-width="1"/><text x="1382.4" y="594.2" text-anchor="end" font-family="Liberation Sans" font-size="8.3" fill="#111" textLength="8.6" lengthAdjust="spacingAndGlyphs">65</text><text transform="translate(1395.5,823.5) rotate(-45)" text-anchor="end" font-family="Liberation Sans" font-size="8.5" fill="#222">Services</text><line x1="1424.2" y1="591" x2="1424.2" y2="815.8" stroke="#f2f2f2" stroke-width="1"/><text transform="translate(1431.8,823.5) rotate(-45)" text-anchor="end" font-family="Liberation Sans" font-size="8.5" fill="#222">Fashion</text><line x1="1460.5" y1="591" x2="1460.5" y2="815.8" stroke="#f2f2f2" stroke-width="1"/><text transform="translate(1468.0,823.5) rotate(-45)" text-anchor="end" font-family="Liberation Sans" font-size="8.5" fill="#222">Toys</text><line x1="1496.8" y1="591" x2="1496.8" y2="815.8" stroke="#f2f2f2" stroke-width="1"/><text transform="translate(1504.2,823.5) rotate(-45)" text-anchor="end" font-family="Liberation Sans" font-size="8.5" fill="#222">Healthcare</text><line x1="1533.0" y1="591" x2="1533.0" y2="815.8" stroke="#f2f2f2" stroke-width="1"/><text transform="translate(1540.5,823.5) rotate(-45)" text-anchor="end" font-family="Liberation Sans" font-size="8.5" fill="#222">Jewelry</text><line x1="1569.2" y1="591" x2="1569.2" y2="815.8" stroke="#f2f2f2" stroke-width="1"/><text transform="translate(1576.8,823.5) rotate(-45)" text-anchor="end" font-family="Liberation Sans" font-size="8.5" fill="#222">Tools</text><line x1="1605.5" y1="591" x2="1605.5" y2="815.8" stroke="#f2f2f2" stroke-width="1"/><text transform="translate(1613.0,823.5) rotate(-45)" text-anchor="end" font-family="Liberation Sans" font-size="8.5" fill="#222">Sport</text><line x1="1641.8" y1="591" x2="1641.8" y2="815.8" stroke="#f2f2f2" stroke-width="1"/><text transform="translate(1649.2,823.5) rotate(-45)" text-anchor="end" font-family="Liberation Sans" font-size="8.5" fill="#222">Food</text><line x1="1678.0" y1="591" x2="1678.0" y2="815.8" stroke="#f2f2f2" stroke-width="1"/><text transform="translate(1685.5,823.5) rotate(-45)" text-anchor="end" font-family="Liberation Sans" font-size="8.5" fill="#222">Transport</text><line x1="1714.2" y1="591" x2="1714.2" y2="815.8" stroke="#f2f2f2" stroke-width="1"/><text transform="translate(1721.8,823.5) rotate(-45)" text-anchor="end" font-family="Liberation Sans" font-size="8.5" fill="#222">Electronics</text><path d="M1388.00 647.89 C1394.04 658.60 1412.17 710.08 1424.25 712.15 C1436.33 714.22 1448.42 669.02 1460.50 660.32 C1472.58 651.63 1484.67 662.28 1496.75 659.98 C1508.83 657.68 1520.92 641.26 1533.00 646.50 C1545.08 651.75 1557.17 692.34 1569.25 691.42 C1581.33 690.50 1593.42 644.09 1605.50 640.98 C1617.58 637.87 1629.67 665.22 1641.75 672.76 C1653.83 680.31 1665.92 698.10 1678.00 686.24 C1690.08 674.38 1708.21 615.70 1714.25 601.59 L1714.25 815.8 L1388.0 815.8 Z" fill="#4f81bd" fill-opacity="0.8"/><path d="M1388.00 694.88 C1394.04 697.47 1412.17 720.21 1424.25 710.42 C1436.33 700.63 1448.42 640.46 1460.50 636.14 C1472.58 631.82 1484.67 679.62 1496.75 684.51 C1508.83 689.40 1520.92 672.01 1533.00 665.51 C1545.08 659.00 1557.17 636.54 1569.25 645.47 C1581.33 654.39 1593.42 716.35 1605.50 719.06 C1617.58 721.77 1629.67 666.31 1641.75 661.71 C1653.83 657.10 1665.92 688.48 1678.00 691.42 C1690.08 694.36 1708.21 681.34 1714.25 679.33 L1714.25 815.8 L1388.0 815.8 Z" fill="#c0504d" fill-opacity="0.8"/><path d="M1388.00 681.05 C1394.04 674.55 1412.17 641.21 1424.25 642.01 C1436.33 642.82 1448.42 680.65 1460.50 685.89 C1472.58 691.13 1484.67 673.05 1496.75 673.45 C1508.83 673.86 1520.92 685.60 1533.00 688.31 C1545.08 691.02 1557.17 679.39 1569.25 689.69 C1581.33 700.00 1593.42 748.95 1605.50 750.15 C1617.58 751.36 1629.67 711.92 1641.75 696.95 C1653.83 681.98 1665.92 660.32 1678.00 660.32 C1690.08 660.32 1708.21 690.84 1714.25 696.95 L1714.25 815.8 L1388.0 815.8 Z" fill="#9bbb59" fill-opacity="0.8"/><path d="M1388.00 682.78 C1394.04 688.37 1412.17 716.24 1424.25 716.30 C1436.33 716.35 1448.42 693.32 1460.50 683.13 C1472.58 672.94 1484.67 655.66 1496.75 655.14 C1508.83 654.62 1520.92 678.75 1533.00 680.02 C1545.08 681.29 1557.17 667.52 1569.25 662.74 C1581.33 657.96 1593.42 652.95 1605.50 651.34 C1617.58 649.73 1629.67 651.00 1641.75 653.07 C1653.83 655.14 1665.92 660.38 1678.00 663.78 C1690.08 667.18 1708.21 671.84 1714.25 673.45 L1714.25 815.8 L1388.0 815.8 Z" fill="#8064a2" fill-opacity="0.8"/><line x1="1388.0" y1="591" x2="1388.0" y2="816.5" stroke="#666" stroke-width="1.5"/><line x1="1388.0" y1="816.3" x2="1714.5" y2="816.3" stroke="#222" stroke-width="1.5"/><text transform="translate(1370.2,703.4) rotate(-90)" text-anchor="middle" font-family="Liberation Sans" font-size="11" fill="#111" textLength="112.2" lengthAdjust="spacingAndGlyphs">Average Age of customer</text></svg>
<svg width="1908" height="909"><rect x="1608.1" y="85.2" width="18" height="20" fill="#fff"/><path d="M1609.7 103.9 L1616.8 103.9 L1624.4 86.5 L1619.5 86.5 Z M1616.3 98.1 H1624.4 V100.7 H1616.3 Z" fill="#62185d"/><text x="1630.6" y="103.9" font-family="Liberation Sans" font-size="15.4" fill="#fff" textLength="46.4" lengthAdjust="spacingAndGlyphs">ACME</text><text x="1680" y="103.9" font-family="Liberation Sans" font-size="9.2" fill="#fff" textLength="18" lengthAdjust="spacingAndGlyphs">INC.</text></svg>
</body></html>
